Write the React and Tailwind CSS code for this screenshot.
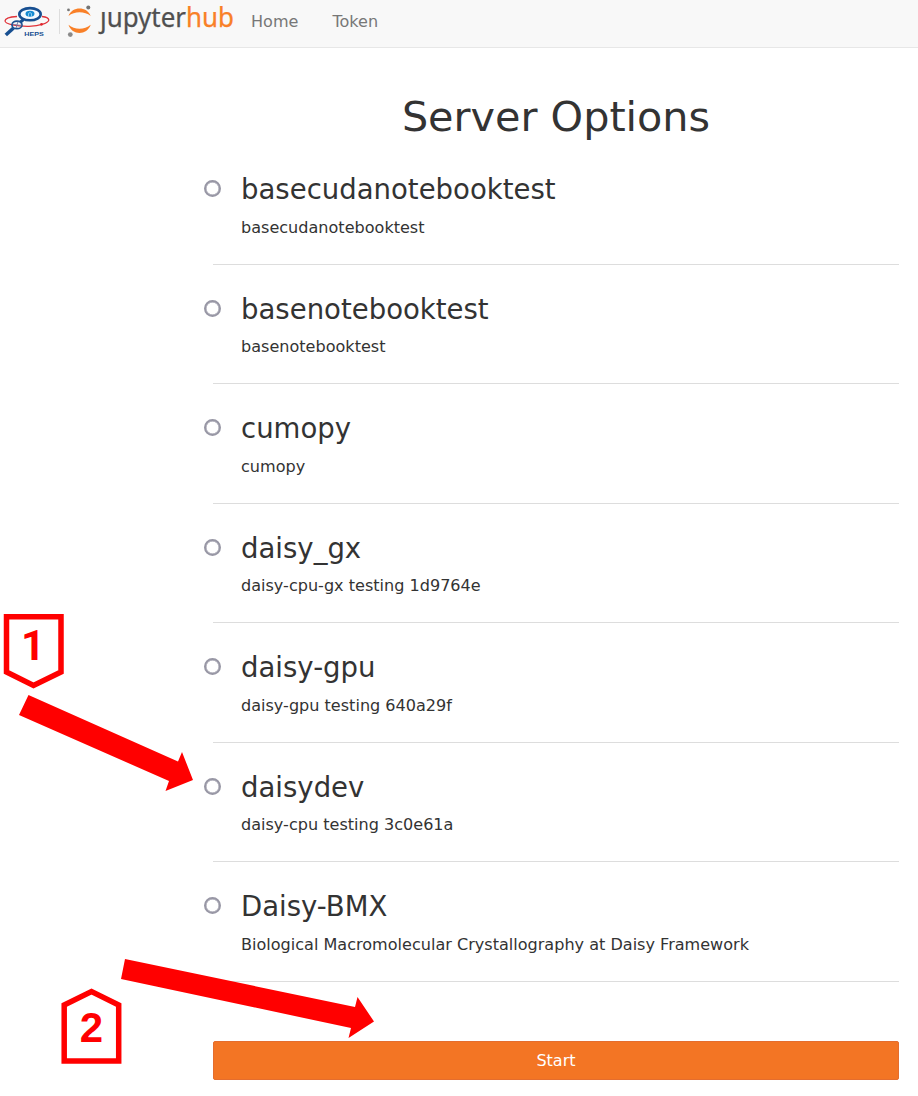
const options = [
  { name: 'basecudanotebooktest', description: 'basecudanotebooktest' },
  { name: 'basenotebooktest', description: 'basenotebooktest' },
  { name: 'cumopy', description: 'cumopy' },
  { name: 'daisy_gx', description: 'daisy-cpu-gx testing 1d9764e' },
  { name: 'daisy-gpu', description: 'daisy-gpu testing 640a29f' },
  { name: 'daisydev', description: 'daisy-cpu testing 3c0e61a' },
  { name: 'Daisy-BMX', description: 'Biological Macromolecular Crystallography at Daisy Framework' },
];

function HepsLogo() {
  return (
    <svg width="46" height="36" viewBox="0 0 46 36" fill="none" className="block shrink-0">
      <path d="M13 10.500C5 11 1 13 1 15C1.500 18 12 20.500 25 20.300C36 20 44.500 17 44.800 14C44.800 12.200 42 11 38 10.500" stroke="#e0343b" strokeWidth="1.300" />
      <path d="M19.500 13.500L16 16.500" stroke="#174f91" strokeWidth="3" />
      <path d="M9.500 22L1.800 29" stroke="#174f91" strokeWidth="3.600" />
      <ellipse cx="26" cy="8.200" rx="10.700" ry="6.100" stroke="#174f91" strokeWidth="2.600" fill="#f5faff" />
      <ellipse cx="13" cy="18.900" rx="5" ry="3.700" stroke="#174f91" strokeWidth="1.700" />
      <path d="M8.500 18C11 19 15 19.500 18 19M14 15.500L12 22" stroke="#6d6d9c" strokeWidth=".9" />
      <ellipse cx="26" cy="7.800" rx="4.500" ry="3" fill="#168bd2" />
      <path d="M24.500 10.500V7.500L26 6.500L27.500 7.500V10.500" stroke="#bde3f7" strokeWidth=".7" />
      <circle cx="37.500" cy="18.300" r="1.400" fill="#e0262d" />
      <text x="20.300" y="29.700" textLength="19.500" lengthAdjust="spacingAndGlyphs" fill="#174f91" className="font-['Liberation_Sans'] text-[6.2px] font-bold">HEPS</text>
    </svg>
  );
}

function HubLogo() {
  return (
    <svg width="170" height="46" viewBox="0 -4 170 46" className="block shrink-0">
      <path d="M2.500 12C6 2.100 21 2.100 24.700 12C18.500 7 8.500 7 2.500 12Z" fill="#f98028" />
      <path d="M2.500 20.700C8.500 26 18.500 26 24.700 20.700C21 31.700 6 31.700 2.500 20.700Z" fill="#f98028" />
      <circle cx="22.300" cy="3.500" r="2" fill="#747474" />
      <circle cx="2.500" cy="5.900" r="1.400" fill="#777" />
      <circle cx="4.300" cy="30.600" r="2.400" fill="#8a8a8a" />
      <text x="34" y="23.300" textLength="86" lengthAdjust="spacingAndGlyphs" fill="#505050" stroke="#505050" strokeWidth=".25" className="font-['Noto_Sans'] text-[26.5px]">ȷupyter</text>
      <text x="120" y="23.300" textLength="48" lengthAdjust="spacingAndGlyphs" fill="#f98028" stroke="#f98028" strokeWidth=".25" className="font-['Noto_Sans'] text-[26.5px]">hub</text>
    </svg>
  );
}

function Annotations() {
  return (
    <svg width="400" height="500" viewBox="0 600 400 500" className="pointer-events-none absolute left-0 top-[600px]">
      <path d="M6.500 616.700H61V672L33.500 685.500L6.500 672Z" fill="#fff" stroke="#f00" strokeWidth="5.500" />
      <text x="33" y="660" textAnchor="middle" fill="#f00" className="font-['Roboto'] text-[42px] font-bold">1</text>
      <path d="M28.500 695L178 761.500L182 752L193 780L165.500 791L169 781L19 715Z" fill="#f00" />
      <path d="M125 959L355 1007L357.500 997L374 1021.500L348.500 1038L351 1028L121 979Z" fill="#f00" />
      <path d="M64.200 1061V1005L91.500 991.500L118.700 1005V1061Z" fill="#fff" stroke="#f00" strokeWidth="5.500" />
      <text x="91.500" y="1042" textAnchor="middle" fill="#f00" className="font-['Liberation_Sans'] text-[42px] font-bold">2</text>
    </svg>
  );
}

export default function App() {
  return (
    <div className="relative h-[1096px] overflow-hidden bg-white font-['DejaVu_Sans',sans-serif] text-[16.07px] text-[#333]">
      <header className="flex h-12 items-start border-b border-[#e7e7e7] bg-[#f8f8f8]">
        <div className="flex pl-1 pt-1.5"><HepsLogo /></div>
        <div className="ml-[9px] mt-[9px] h-[25px] w-px bg-[#ddd]" />
        <div className="ml-1.5"><HubLogo /></div>
        <nav className="flex gap-[34px] pl-[15px] pt-[10px] leading-6 text-[#777]">
          <a>Home</a>
          <a>Token</a>
        </nav>
      </header>
      <main className="ml-[213px] w-[686px]">
        <h1 className="h-[97px] pt-[45px] text-center text-[41.35px] leading-[48px]">Server Options</h1>
        <form>
          {options.map((option) => (
            <label key={option.name} className="flex h-[119.53px] border-b border-[#ddd]">
              <input type="radio" name="profile" className="-ml-[9px] mt-[35px] size-[17px] shrink-0 appearance-none rounded-full border-2 border-[#9897a5] bg-white shadow-[inset_0_0_0_0.5px_#9897a5]" />
              <span className="flex flex-col pl-5 pt-[28px]">
                <span className="text-[27.54px] leading-8">{option.name}</span>
                <span className="mt-[10.6px] leading-6">{option.description}</span>
              </span>
            </label>
          ))}
          <button type="button" className="mt-[59px] block h-[39px] w-full rounded-[2px] border border-[#e46d2e] bg-[#f37524] pt-px text-center leading-6 text-white">Start</button>
        </form>
      </main>
      <Annotations />
    </div>
  );
}
